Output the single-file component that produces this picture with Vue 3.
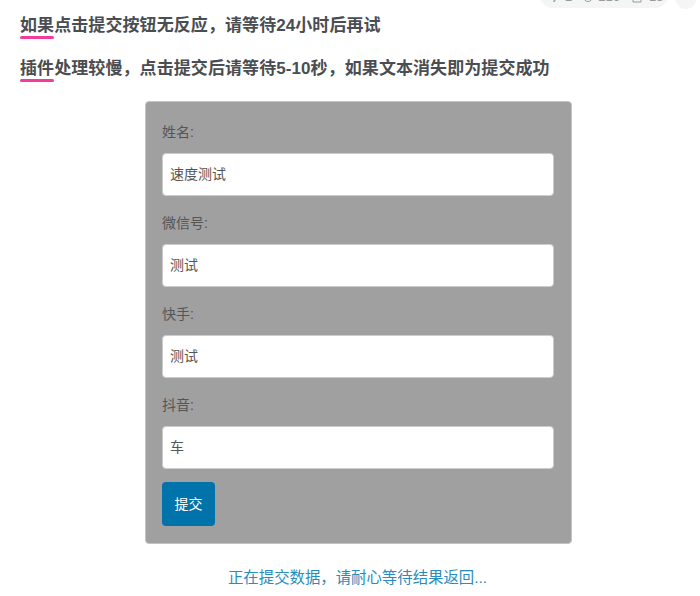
<script setup>
import { ref } from "vue";

const fields = ref([
  { label: "姓名:", value: "速度测试" },
  { label: "微信号:", value: "测试" },
  { label: "快手:", value: "测试" },
  { label: "抖音:", value: "车" },
]);
</script>

<template>
  <div class="page">
    <div class="meta-row">
      <div class="meta-pill">
        <span class="meta-item">
          <svg width="11" height="13" viewBox="0 0 11 13" fill="none" stroke="#9a9a9a" stroke-width="1"><path d="M1 1h9v8H5l-2 3V9H1z" /></svg>
          2
        </span>
        <span class="meta-item meta-views">
          <svg width="10" height="13" viewBox="0 0 10 13" fill="none" stroke="#9a9a9a" stroke-width="1"><circle cx="5" cy="7" r="4.5" /></svg>
          216
        </span>
        <span class="meta-item meta-likes">
          <svg width="10" height="13" viewBox="0 0 10 13" fill="none" stroke="#9a9a9a" stroke-width="1"><path d="M1 6h8v6H1zM3 6V1h4v5" /></svg>
          18
        </span>
      </div>
      <div class="meta-circle"></div>
    </div>

    <p class="notice"><span class="mark">如果</span>点击提交按钮无反应，请等待24小时后再试</p>
    <p class="notice"><span class="mark">插件</span>处理较慢，点击提交后请等待5-10秒，如果文本消失即为提交成功</p>

    <form class="form-card" @submit.prevent>
      <div v-for="field in fields" :key="field.label" class="field">
        <label class="field-label">{{ field.label }}</label>
        <input class="field-input" type="text" :value="field.value" />
      </div>
      <button class="submit-btn" type="button">提交</button>
    </form>

    <p class="status">正在提交数据，请耐心等待结果返回...</p>
  </div>
</template>

<style>
html, body {
  margin: 0;
  background: #fff;
  overflow: hidden;
}
</style>

<style scoped>
* {
  box-sizing: border-box;
}

.page {
  width: 700px;
  height: 596px;
  overflow: hidden;
  padding: 0 20px;
  font-family: "Liberation Sans", "Noto Sans CJK SC", sans-serif;
}

.meta-row {
  display: flex;
  justify-content: flex-end;
  gap: 7px;
  height: 9px;
  margin: 0 -17px 0 0;
  overflow: hidden;
}

.meta-pill {
  display: flex;
  align-items: flex-end;
  width: 128px;
  height: 26px;
  margin-top: -18px;
  padding: 0 0 5px 11px;
  background: #f4f5f5;
  border-radius: 13px;
  font-size: 13px;
  line-height: 13px;
  color: #9a9a9a;
}

.meta-item {
  display: flex;
  align-items: center;
  gap: 3px;
}

.meta-views {
  gap: 5px;
  margin-left: 11px;
}

.meta-likes {
  gap: 7px;
  margin-left: 12px;
}

.meta-circle {
  width: 22px;
  height: 26px;
  margin-top: -17px;
  background: #f4f5f5;
  border-radius: 50%;
}

.notice {
  margin: 4px 0 18px;
  height: 25px;
  font-size: 17px;
  line-height: 25px;
  font-weight: 700;
  letter-spacing: 0.08px;
  color: #4a4d52;
}

.notice + .notice {
  margin: 0 0 20px;
}

.mark {
  display: inline-block;
  position: relative;
}

.mark::after {
  content: "";
  position: absolute;
  left: 0;
  right: 0;
  bottom: -1px;
  height: 3px;
  border-radius: 2px;
  background: #f23d9c;
}

.form-card {
  width: 427px;
  height: 443px;
  margin: 0 0 0 125px;
  padding: 18px 17px 0 16px;
  background: #a0a0a0;
  border: 1px solid #c4c4c4;
  border-radius: 4px;
}

.field {
  display: flex;
  flex-direction: column;
  margin-bottom: 15px;
}

.field:last-of-type {
  margin-bottom: 13px;
}

.field-label {
  height: 24px;
  margin-bottom: 9px;
  font-size: 14px;
  line-height: 24px;
  color: #555;
}

.field-input {
  height: 43px;
  padding: 0 7px 4px;
  font-family: inherit;
  font-size: 14px;
  color: #555;
  background: #fff;
  border: 1px solid #ccc;
  border-radius: 4px;
  outline: none;
}

.submit-btn {
  display: block;
  width: 53px;
  height: 44px;
  padding: 0 0 3px;
  font-family: inherit;
  font-size: 14px;
  color: #fff;
  background: #0073aa;
  border: none;
  border-radius: 4px;
}

.status {
  margin: 22px 0 0 0;
  font-size: 15.4px;
  line-height: 24px;
  text-align: center;
  color: #2a8cbb;
  width: 675px;
}
</style>
